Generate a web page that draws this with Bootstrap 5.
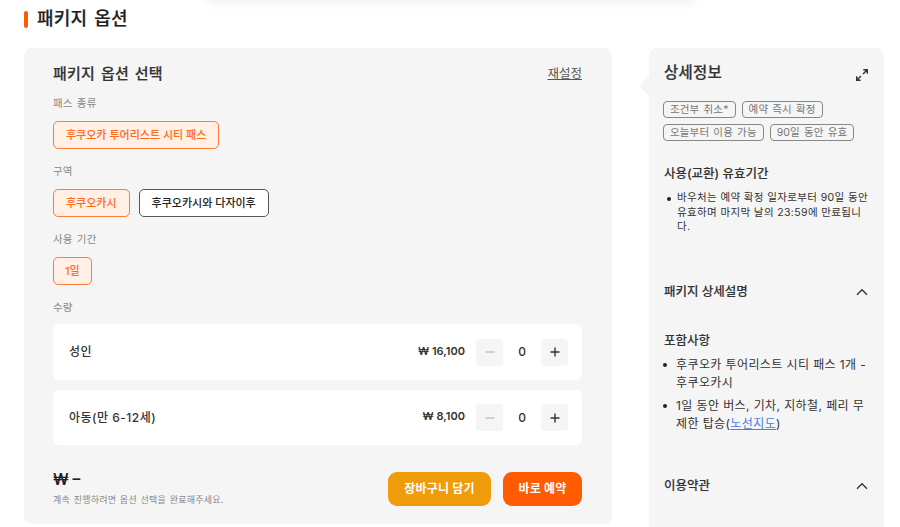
<!DOCTYPE html>
<html lang="ko">
<head>
  <meta charset="UTF-8">
  <meta name="viewport" content="width=device-width, initial-scale=1">
  <title>패키지 옵션</title>
  <link href="https://cdn.jsdelivr.net/npm/bootstrap@5.3.0/dist/css/bootstrap.min.css" rel="stylesheet">
  <style>
    body {
      height: 527px;
      overflow: hidden;
      position: relative;
      font-family: Inter, "Noto Sans CJK KR", sans-serif;
      font-size: 12px;
      line-height: 16px;
      color: #333;
    }
    .page { padding: 6px 16px 0 24px; }

    /* bottom shadow of the sticky bar above the section */
    .bar-shadow {
      position: absolute;
      top: -20px;
      left: 206px;
      width: 488px;
      height: 20px;
      box-shadow: 0 2px 12px rgba(0, 0, 0, .07);
    }

    .page-title { height: 26px; margin-bottom: 16px; gap: 9px; }
    .page-title h1 { font-size: 18px; font-weight: 500; line-height: 26px; color: #212121; word-spacing: 2px; letter-spacing: .2px; -webkit-text-stroke: .2px; }
    .title-mark { width: 4px; height: 17px; border-radius: 2px; background: #ff5b00; margin-top: 1px; }

    .panel { background: #f5f5f5; border-radius: 8px; }
    .option-panel { width: 588px; height: 476px; padding: 14px 30px 0 29px; }
    .option-panel h2, .info-panel h2 { font-size: 15px; font-weight: 500; line-height: 24px; -webkit-text-stroke: .2px; }
    .option-panel h2 { word-spacing: 1.5px; letter-spacing: .25px; }
    .head-row { margin-bottom: 10px; }
    .reset { font-size: 12.5px; line-height: 18px; color: #555; }

    .group-label { height: 16px; margin-bottom: 9px; font-size: 10.5px; color: #888; word-spacing: 1px; letter-spacing: .2px; }
    .options { gap: 9px; margin-bottom: 15px; }
    .option {
      height: 28px;
      padding: 0 12px;
      border: 1px solid #555;
      border-radius: 5px;
      background: #fff;
      color: #222;
      font-size: 11px;
      font-weight: 500;
      line-height: 23px;
    }
    .option.selected { border-color: #ff7c3b; background: #ffefe5; color: #ff6a1c; }
    .option-short { padding: 0 11px; }

    .qty-row { height: 56px; padding: 0 14px 0 15px; background: #fff; border-radius: 6px; }
    .qty-row + .qty-row { height: 55px; margin-top: 10px; }
    .qty-name { font-size: 12px; font-weight: 500; letter-spacing: .5px; padding-left: 1px; }
    .price { font-size: 11px; font-weight: 600; margin-right: 11px; padding-bottom: 3px; }
    .step { width: 27px; height: 27px; border: 0; padding: 0; border-radius: 4px; background: #f5f5f5; color: #333; }
    .step:disabled { color: #bbb; }
    .count { width: 38px; font-size: 12px; font-weight: 500; }

    .checkout { margin-top: 25px; }
    .total { font-size: 15.5px; font-weight: 600; line-height: 20px; color: #222; }
    .hint { font-size: 9px; line-height: 14px; margin-top: 3px; color: #888; letter-spacing: .25px; word-spacing: .8px; }
    .action-list { gap: 12px; margin-top: 2px; }
    .action { height: 34px; padding: 0; border: 0; border-radius: 9px; color: #fff; font-size: 12px; font-weight: 700; line-height: 32px; letter-spacing: .2px; }
    .action-cart { width: 103px; background: #f09b0a; }
    .action-book { width: 79px; background: #ff5b00; }

    .info-panel { position: relative; width: 235px; height: 490px; padding: 13px 15px 0; }
    .info-panel::before {
      content: "";
      position: absolute;
      left: -10px;
      top: 28px;
      border: solid transparent;
      border-width: 10px 10px 10px 0;
      border-right-color: #f5f5f5;
    }
    .info-panel h2 { font-size: 15.5px; letter-spacing: .2px; }
    .info-panel h3 { font-size: 12.5px; font-weight: 500; line-height: 18px; -webkit-text-stroke: .1px; }
    .expand-icon { margin: 3px 0 0; }
    .tags { gap: 6px; margin: 16px 0 0 -1px; }
    .info-tag { height: 17px; padding: 0 6px; border: 1px solid #888; border-radius: 4px; color: #777; font-size: 10.5px; line-height: 15px; word-spacing: 1px; letter-spacing: .15px; }
    .validity-title { margin: 24px 0 8px; }
    .validity, .included { list-style: none; }
    .validity li, .included li { position: relative; }
    .validity li::before, .included li::before {
      content: "";
      position: absolute;
      left: -10px;
      top: 6px;
      width: 4px;
      height: 4px;
      border-radius: 50%;
      background: #222;
    }
    .included li::before { left: -13px; top: 7px; }
    .validity { padding-left: 13px; font-size: 10.5px; line-height: 14.7px; letter-spacing: .37px; }
    .included { padding-left: 12px; font-size: 12px; line-height: 17.5px; letter-spacing: .4px; }
    .included li + li { margin-top: 6px; }
    .included a { color: #4a7de0; }
    .package-head { margin-top: 48px; }
    .included-title { margin: 31px 0 6px; }
    .terms-head { margin-top: 45px; }
    .chevron { margin-right: 1px; }
  </style>
</head>
<body>

<div class="bar-shadow"></div>

<div class="page">
  <div class="page-title d-flex align-items-center">
    <span class="title-mark"></span>
    <h1 class="mb-0">패키지 옵션</h1>
  </div>

  <div class="d-flex justify-content-start" style="gap: 37px">
    <!-- Package options -->
    <section class="panel option-panel flex-shrink-0">
      <div class="head-row d-flex justify-content-between align-items-center">
        <h2 class="mb-0">패키지 옵션 선택</h2>
        <a href="#" class="reset">재설정</a>
      </div>

      <div class="group-label">패스 종류</div>
      <div class="options d-flex">
        <button class="option selected">후쿠오카 투어리스트 시티 패스</button>
      </div>

      <div class="group-label">구역</div>
      <div class="options d-flex">
        <button class="option selected">후쿠오카시</button>
        <button class="option">후쿠오카시와 다자이후</button>
      </div>

      <div class="group-label">사용 기간</div>
      <div class="options d-flex">
        <button class="option option-short selected">1일</button>
      </div>

      <div class="group-label mb-2">수량</div>
      <div class="qty-row d-flex align-items-center">
        <span class="qty-name me-auto">성인</span>
        <span class="price">₩ 16,100</span>
        <button class="step d-flex align-items-center justify-content-center" disabled>
          <svg width="12" height="12" viewBox="0 0 12 12" stroke="currentColor" stroke-width="1.3"><path d="M1.5 6h9"/></svg>
        </button>
        <span class="count text-center">0</span>
        <button class="step d-flex align-items-center justify-content-center">
          <svg width="12" height="12" viewBox="0 0 12 12" stroke="currentColor" stroke-width="1.4"><path d="M1.5 6h9M6 1.5v9"/></svg>
        </button>
      </div>
      <div class="qty-row d-flex align-items-center">
        <span class="qty-name me-auto">아동(만 6-12세)</span>
        <span class="price">₩ 8,100</span>
        <button class="step d-flex align-items-center justify-content-center" disabled>
          <svg width="12" height="12" viewBox="0 0 12 12" stroke="currentColor" stroke-width="1.3"><path d="M1.5 6h9"/></svg>
        </button>
        <span class="count text-center">0</span>
        <button class="step d-flex align-items-center justify-content-center">
          <svg width="12" height="12" viewBox="0 0 12 12" stroke="currentColor" stroke-width="1.4"><path d="M1.5 6h9M6 1.5v9"/></svg>
        </button>
      </div>

      <div class="checkout d-flex align-items-start justify-content-between">
        <div>
          <div class="total">₩ –</div>
          <div class="hint">계속 진행하려면 옵션 선택을 완료해주세요.</div>
        </div>
        <div class="action-list d-flex">
          <button class="action action-cart">장바구니 담기</button>
          <button class="action action-book">바로 예약</button>
        </div>
      </div>
    </section>

    <!-- Package details -->
    <aside class="panel info-panel flex-shrink-0">
      <div class="d-flex justify-content-between align-items-center">
        <h2 class="mb-0">상세정보</h2>
        <svg class="expand-icon" width="14" height="14" viewBox="0 0 14 14" fill="none" stroke="#333" stroke-width="1.4"><path d="M8.3 1.7h4v4M12.3 1.7 8 6M5.7 12.3h-4v-4M1.7 12.3 6 8"/></svg>
      </div>
      <div class="tags d-flex flex-wrap">
        <span class="info-tag">조건부 취소*</span>
        <span class="info-tag">예약 즉시 확정</span>
        <span class="info-tag">오늘부터 이용 가능</span>
        <span class="info-tag">90일 동안 유효</span>
      </div>

      <h3 class="validity-title">사용(교환) 유효기간</h3>
      <ul class="validity mb-0">
        <li>바우처는 예약 확정 일자로부터 90일 동안<br>유효하며 마지막 날의 23:59에 만료됩니<br>다.</li>
      </ul>

      <div class="package-head d-flex justify-content-between align-items-center">
        <h3 class="mb-0">패키지 상세설명</h3>
        <svg class="chevron" width="12" height="12" viewBox="0 0 12 12" fill="none" stroke="#333" stroke-width="1.4"><path d="M1 8.7 6 3.7l5 5"/></svg>
      </div>

      <h3 class="included-title">포함사항</h3>
      <ul class="included mb-0">
        <li>후쿠오카 투어리스트 시티 패스 1개 -<br>후쿠오카시</li>
        <li>1일 동안 버스, 기차, 지하철, 페리 무<br>제한 탑승(<a href="#">노선지도</a>)</li>
      </ul>

      <div class="terms-head d-flex justify-content-between align-items-center">
        <h3 class="mb-0">이용약관</h3>
        <svg class="chevron" width="12" height="12" viewBox="0 0 12 12" fill="none" stroke="#333" stroke-width="1.4"><path d="M1 8.7 6 3.7l5 5"/></svg>
      </div>
    </aside>
  </div>
</div>

<script src="https://cdn.jsdelivr.net/npm/bootstrap@5.3.0/dist/js/bootstrap.bundle.min.js"></script>
</body>
</html>
